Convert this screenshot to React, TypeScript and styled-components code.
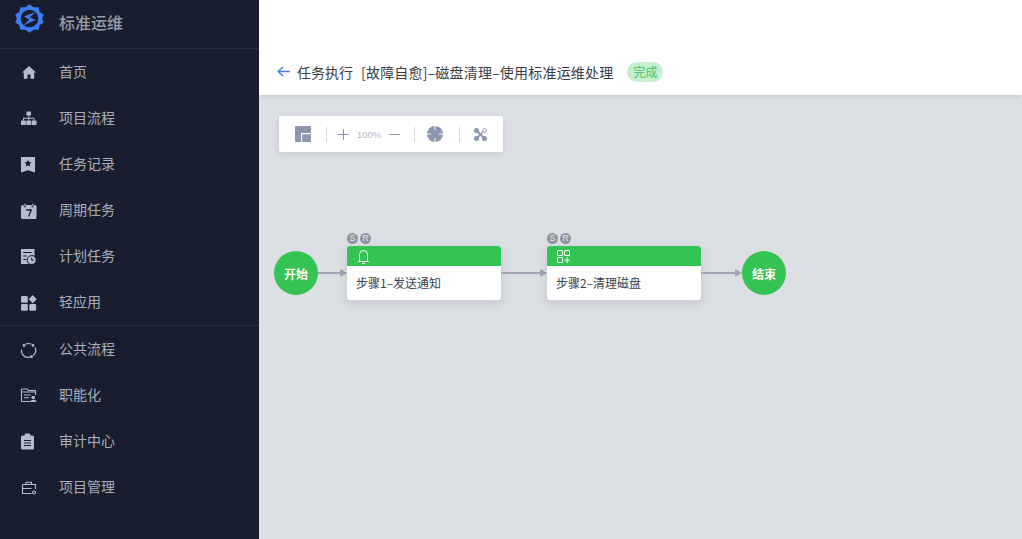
import { ReactNode } from "react";
import styled, { createGlobalStyle } from "styled-components";

const Global = createGlobalStyle`
	html, body, #root {
		height: 100%;
		margin: 0;
	}
	body {
		font-family: "Noto Sans CJK SC", "Noto Sans", sans-serif;
		overflow: hidden;
	}
`;

const Page = styled.div`
	display: flex;
	width: 1022px;
	height: 539px;
`;
const Sidebar = styled.aside`
	flex: 0 0 259px;
	background: #181e2d;
`;
const Brand = styled.div`
	display: flex;
	align-items: flex-start;
	gap: 15px;
	height: 49px;
	padding: 4px 0 0 15px;
	box-sizing: border-box;
	border-bottom: 1px solid #2b303e;
`;
const BrandName = styled.span`
	font-size: 16px;
	line-height: 22px;
	font-weight: 500;
	color: #9a9ea8;
	margin-top: 7px;
`;
const Menu = styled.nav<{ $divided?: boolean }>`
	border-top: ${(p) => (p.$divided ? "1px solid #2b303e" : "none")};
`;
const MenuItem = styled.div`
	display: flex;
	align-items: center;
	height: 46px;
	padding-left: 20px;
	gap: 23px;
	font-size: 14px;
	color: #a8aebd;
`;
const MenuLabel = styled.span`
	line-height: 20px;
	margin-bottom: 2px;
`;
const MenuIcon = styled.span`
	display: flex;
	width: 16px;
	height: 16px;
	margin-top: 2px;
	svg {
		display: block;
		overflow: visible;
	}
`;

const Main = styled.main`
	flex: 1;
	display: flex;
	flex-direction: column;
	min-width: 0;
`;
const TopBar = styled.div`
	height: 50px;
	background: #fff;
`;
const TitleBar = styled.div`
	position: relative;
	z-index: 1;
	display: flex;
	align-items: center;
	height: 45px;
	padding: 0 0 2px 18px;
	box-sizing: border-box;
	background: #fff;
	box-shadow: 0 3px 4px -2px rgba(0, 0, 0, 0.12);
	font-size: 14px;
	color: #3a3d45;
`;
const BackArrow = styled.svg`
	width: 13px;
	height: 11px;
	margin-right: 7px;
`;
const PageName = styled.span`
	margin-right: 8px;
`;
const TaskName = styled.span`
	letter-spacing: 0.2px;
	margin-right: 14px;
`;
const StatusTag = styled.span`
	display: flex;
	align-items: center;
	justify-content: center;
	width: 36px;
	height: 20px;
	border-radius: 10px;
	background: #c6efd0;
	color: #3ec25c;
	font-size: 12px;
`;

const Canvas = styled.section`
	position: relative;
	flex: 1;
	background: #dcdfe4;
`;
const Toolbar = styled.div`
	position: absolute;
	left: 20px;
	top: 21px;
	display: flex;
	align-items: center;
	width: 224px;
	height: 36px;
	padding-left: 16px;
	box-sizing: border-box;
	background: #fff;
	border-radius: 2px;
	box-shadow: 0 2px 6px rgba(0, 0, 0, 0.1);
`;
const ToolDivider = styled.i<{ $left: number; $right: number }>`
	width: 1px;
	height: 15px;
	background: #d5d8de;
	margin: 0 ${(p) => p.$right}px 0 ${(p) => p.$left}px;
`;
const Zoom = styled.span`
	font-size: 9.5px;
	color: #b4b8c2;
	width: 24px;
	margin: 0 8px;
	font-family: "Liberation Sans", sans-serif;
	white-space: nowrap;
`;

const Circle = styled.div<{ $x: number }>`
	position: absolute;
	left: ${(p) => p.$x}px;
	top: 156px;
	display: flex;
	align-items: center;
	justify-content: center;
	width: 44px;
	height: 44px;
	border-radius: 50%;
	background: #35c353;
	color: #fff;
	font-size: 12px;
	font-weight: 700;
`;
const Edge = styled.svg<{ $x: number; $w: number }>`
	position: absolute;
	left: ${(p) => p.$x}px;
	top: 172px;
	width: ${(p) => p.$w}px;
	height: 12px;
`;
const Node = styled.div<{ $x: number }>`
	position: absolute;
	left: ${(p) => p.$x}px;
	top: 151px;
	width: 154px;
	height: 54px;
	border-radius: 3px;
	background: #fff;
	box-shadow: 0 3px 12px rgba(0, 0, 0, 0.12);
`;
const NodeHead = styled.div`
	display: flex;
	align-items: center;
	height: 20px;
	padding-left: 10px;
	background: #35c353;
	border-radius: 3px 3px 0 0;
`;
const NodeText = styled.div`
	padding: 8px 0 0 9px;
	font-size: 12px;
	line-height: 18px;
	color: #3c4048;
`;
const Badges = styled.div`
	position: absolute;
	left: 0;
	top: -13px;
	display: flex;
	gap: 2px;
`;
const Badge = styled.span`
	display: flex;
	align-items: center;
	justify-content: center;
	width: 11px;
	height: 11px;
	border-radius: 50%;
	background: #90939c;
	color: #e4e6ea;
	font-size: 9px;
	line-height: 1;
	font-family: "Liberation Sans", sans-serif;
`;

const fill = "#b4bccf";

function Icon({ children }: { children: ReactNode }) {
	return (
		<MenuIcon>
			<svg width="16" height="16" viewBox="0 0 16 16">
				{children}
			</svg>
		</MenuIcon>
	);
}

const icons = {
	home: (
		<path fill={fill} d="M9 1 16 7.500H14.200V13.800H10.500V9.500H7.500V13.800H3.800V7.500H2Z" />
	),
	flow: (
		<g fill={fill}>
			<rect x="6.500" y="0.500" width="4.500" height="4" rx="0.500" />
			<rect x="1" y="9.500" width="4.800" height="4.500" rx="0.500" />
			<rect x="6.300" y="9.500" width="4.800" height="4.500" rx="0.500" />
			<rect x="11.700" y="9.500" width="4.800" height="4.500" rx="0.500" />
			<path d="M8.300 4.500h1v2.200h5.200v2.800h-1V7.700H9.300v1.800h-1V7.700H4v1.800H3V6.700h5.300z" />
		</g>
	),
	record: (
		<path
			fill={fill}
			fillRule="evenodd"
			d="M1 0h14v15.500l-7-2.200-7 2.200zM8 2.800 6.900 5.100l-2.500.3 1.800 1.700-.5 2.500L8 8.400l2.300 1.200-.5-2.500 1.800-1.700-2.500-.3z"
		/>
	),
	calendar: (
		<g>
			<rect x="1" y="2" width="15.500" height="14" rx="1.500" fill={fill} />
			<rect x="4" y="0" width="1.500" height="4" fill={fill} stroke="#181e2d" strokeWidth="0.500" />
			<rect x="12" y="0" width="1.500" height="4" fill={fill} stroke="#181e2d" strokeWidth="0.500" />
			<path fill="none" stroke="#181e2d" strokeWidth="1.300" d="M6.300 7h5L8.500 13.500" />
		</g>
	),
	plan: (
		<g>
			<path fill={fill} d="M1 0h13.500v15H1z" />
			<path fill="none" stroke="#181e2d" strokeWidth="1.200" d="M3.200 3.500h8.500M3.200 7h3.500M3.200 10.500h3" />
			<circle cx="11.700" cy="11" r="4.500" fill={fill} stroke="#181e2d" strokeWidth="1" />
			<path fill="none" stroke="#181e2d" strokeWidth="1" d="M11.700 8.500v2.700h2.200" />
		</g>
	),
	apps: (
		<g fill={fill}>
			<rect x="1" y="1" width="6.800" height="6.800" rx="1.200" />
			<rect x="1" y="9" width="6.800" height="6.800" rx="1.200" />
			<rect x="9.300" y="9" width="6.800" height="6.800" rx="1.200" />
			<path d="M12.700 0 16.800 4.200 12.700 8.300 8.600 4.200Z" />
		</g>
	),
	cycle: (
		<g fill="none" stroke={fill} strokeWidth="1.200">
			<path d="M5.500 2.300a6.500 6.500 0 0 1 6 0" />
			<path d="M15 5.500a6.800 6.800 0 0 1-1.800 8" />
			<path d="M10 15.200a6.800 6.800 0 0 1-8.500-7.500" />
			<circle cx="4" cy="3.500" r="0.800" fill={fill} />
			<circle cx="13" cy="3.500" r="0.800" fill={fill} />
			<circle cx="11.500" cy="14.700" r="0.800" fill={fill} />
		</g>
	),
	folder: (
		<g>
			<path
				fill="none"
				stroke={fill}
				strokeWidth="1.100"
				d="M1.500 1h5.500l1.500 1.500h7V7M1.500 1v12.500h9"
			/>
			<path fill="none" stroke={fill} strokeWidth="1" d="M1.500 4h14M4 7h6.500M4 9.800h5" />
			<circle cx="13.200" cy="9.500" r="1.800" fill={fill} />
			<path fill={fill} d="M10.200 14c0-3 6.300-3 6.300 0z" />
		</g>
	),
	clipboard: (
		<g>
			<rect x="1" y="1.500" width="13" height="14" rx="1.500" fill={fill} />
			<rect x="4.700" y="-0.500" width="5.600" height="4" rx="1.200" fill={fill} />
			<path fill="none" stroke="#181e2d" strokeWidth="1" d="M4 6.500h7M4 9h7M4 11.500h7" />
		</g>
	),
	case: (
		<g fill="none" stroke={fill} strokeWidth="1.100">
			<path d="M11.500 13.500H2.500V4.500h13V9" />
			<path d="M6 4.500V2.200h5.500v2.300M2.500 8.500h9" />
			<circle cx="14" cy="12.500" r="1.500" />
		</g>
	)
};

const groupOne: [string, ReactNode][] = [
	["首页", icons.home],
	["项目流程", icons.flow],
	["任务记录", icons.record],
	["周期任务", icons.calendar],
	["计划任务", icons.plan],
	["轻应用", icons.apps]
];
const groupTwo: [string, ReactNode][] = [
	["公共流程", icons.cycle],
	["职能化", icons.folder],
	["审计中心", icons.clipboard],
	["项目管理", icons.case]
];

function Logo() {
	return (
		<svg width="29" height="29" viewBox="0 0 29 29">
			<path
				fill="#3d7df0"
				d="M14.500 0.200 18.500 3.200 23.500 3.200 24.800 8 28.800 10.800 27 14.500 28.800 18.500 24.800 21 23.500 25.800 18.500 25.800 14.500 28.800 10.500 25.800 5.500 25.800 4.200 21 0.200 18.500 2 14.500 0.200 10.800 4.200 8 5.500 3.200 10.500 3.200Z"
			/>
			<circle cx="14.500" cy="14.500" r="8.800" fill="#181e2d" />
			<path
				fill="#3d7df0"
				d="M21 7.500 9 12.500 14.500 15.500 8 21.500 20.500 16 14.800 13.200 Z"
			/>
		</svg>
	);
}

function Step({ x, icon, text }: { x: number; icon: ReactNode; text: string }) {
	return (
		<Node $x={x}>
			<Badges>
				<Badge>S</Badge>
				<Badge>R</Badge>
			</Badges>
			<NodeHead>{icon}</NodeHead>
			<NodeText>{text}</NodeText>
		</Node>
	);
}

function Line({ x, w }: { x: number; w: number }) {
	return (
		<Edge $x={x} $w={w} viewBox={`0 0 ${w} 12`}>
			<path d={`M0 6H${w - 4}`} stroke="#a0a4b4" strokeWidth="2" />
			<path d={`M${w - 7} 2 ${w} 6 ${w - 7} 10Z`} fill="#a0a4b4" />
		</Edge>
	);
}

export default function App() {
	return (
		<Page>
			<Global />
			<Sidebar>
				<Brand>
					<Logo />
					<BrandName>标准运维</BrandName>
				</Brand>
				<Menu>
					{groupOne.map(([label, icon]) => (
						<MenuItem key={label}>
							<Icon>{icon}</Icon>
							<MenuLabel>{label}</MenuLabel>
						</MenuItem>
					))}
				</Menu>
				<Menu $divided>
					{groupTwo.map(([label, icon]) => (
						<MenuItem key={label}>
							<Icon>{icon}</Icon>
							<MenuLabel>{label}</MenuLabel>
						</MenuItem>
					))}
				</Menu>
			</Sidebar>
			<Main>
				<TopBar />
				<TitleBar>
					<BackArrow viewBox="0 0 13 11">
						<path d="M6 1 1.200 5.500 6 10M1.500 5.500H13" fill="none" stroke="#3f7ff0" strokeWidth="1.500" />
					</BackArrow>
					<PageName>任务执行</PageName>
					<TaskName>[故障自愈]–磁盘清理–使用标准运维处理</TaskName>
					<StatusTag>完成</StatusTag>
				</TitleBar>
				<Canvas>
					<Toolbar>
						<svg width="16" height="16" viewBox="0 0 16 16">
							<path fill="#8c96ae" d="M1 0h14a1 1 0 0 1 1 1v14a1 1 0 0 1-1 1H1a1 1 0 0 1-1-1V1a1 1 0 0 1 1-1z" />
							<path fill="none" stroke="#fff" strokeWidth="1.200" d="M6.600 16V7.600H16" />
						</svg>
						<ToolDivider $left={15} $right={11} />
						<svg width="11" height="11" viewBox="0 0 11 11">
							<path d="M0 5.500h11M5.500 0v11" stroke="#8c96ae" strokeWidth="1" />
						</svg>
						<Zoom>100%</Zoom>
						<svg width="11" height="11" viewBox="0 0 11 11">
							<path d="M0 5.500h11" stroke="#8c96ae" strokeWidth="1" />
						</svg>
						<ToolDivider $left={14} $right={12} />
						<svg width="16" height="16" viewBox="0 0 16 16">
							<circle cx="8" cy="8" r="8" fill="#8c96ae" />
							<path d="M8 0v4M8 12v4M0 8h4M12 8h4" stroke="#fff" strokeWidth="1" />
						</svg>
						<ToolDivider $left={16} $right={14} />
						<svg width="13" height="13" viewBox="0 0 13 13">
							<path d="M2.500 2.500 10.500 10.500M2.500 10.500 6.500 6.500" stroke="#8c96ae" strokeWidth="1.800" />
							<path d="M6.500 6.500 9 4" stroke="#8c96ae" strokeWidth="1.200" />
							<circle cx="2.500" cy="2.500" r="2.500" fill="#8c96ae" />
							<circle cx="2.500" cy="10.500" r="2.500" fill="#8c96ae" />
							<circle cx="10.500" cy="10.500" r="2.500" fill="#8c96ae" />
							<circle cx="10.500" cy="2.500" r="1.800" fill="#fff" stroke="#8c96ae" strokeWidth="1" />
						</svg>
					</Toolbar>
					<Circle $x={15}>开始</Circle>
					<Line x={59} w={29} />
					<Step
						x={88}
						text="步骤1–发送通知"
						icon={
							<svg width="13" height="15" viewBox="0 0 13 15">
								<path
									d="M2.500 11.500V5.500a4 4 0 0 1 8 0v6l1 1h-10zM5 14.300h3"
									fill="none"
									stroke="#fff"
									strokeWidth="1"
								/>
							</svg>
						}
					/>
					<Line x={242} w={46} />
					<Step
						x={288}
						text="步骤2–清理磁盘"
						icon={
							<svg width="13" height="13" viewBox="0 0 13 13">
								<g fill="none" stroke="#fff" strokeWidth="1">
									<rect x="0.500" y="0.500" width="5" height="5" rx="0.500" />
									<rect x="7.500" y="0.500" width="5" height="5" rx="0.500" />
									<rect x="0.500" y="7.500" width="5" height="5" rx="0.500" />
									<path d="M7.500 10.200h5.500M10.200 7.500v5.500" />
								</g>
							</svg>
						}
					/>
					<Line x={442} w={41} />
					<Circle $x={483}>结束</Circle>
				</Canvas>
			</Main>
		</Page>
	);
}
